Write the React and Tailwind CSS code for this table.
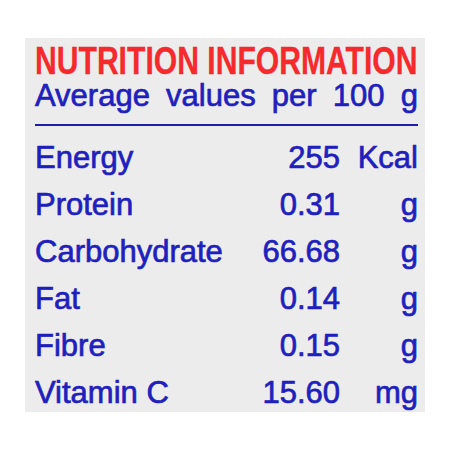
import React from 'react';

const rows = [
  { name: 'Energy', value: '255', unit: 'Kcal' },
  { name: 'Protein', value: '0.31', unit: 'g' },
  { name: 'Carbohydrate', value: '66.68', unit: 'g' },
  { name: 'Fat', value: '0.14', unit: 'g' },
  { name: 'Fibre', value: '0.15', unit: 'g' },
  { name: 'Vitamin C', value: '15.60', unit: 'mg' },
];

const App = () => {
  return (
    <div className="w-[450px] h-[450px] bg-white pt-[38px] pl-[25px] font-['Liberation_Sans',Arial,sans-serif]">
      <div className="w-[400px] h-[374px] bg-[#ececec] pl-[10px] pr-[7px] pt-[4px]">
        <div className="h-[38px] text-[39px] leading-[38px] font-bold text-[#f42a2c] whitespace-nowrap origin-left scale-x-[0.772] [-webkit-text-stroke:0.3px_currentColor]">
          NUTRITION INFORMATION
        </div>
        <div className="mt-[1px] flex justify-between h-[30px] text-[31px] leading-[30px] text-[#1f1fbd] [-webkit-text-stroke:0.7px_currentColor]">
          <span>Average</span>
          <span>values</span>
          <span>per</span>
          <span>100</span>
          <span>g</span>
        </div>
        <div className="mt-[13px] h-[2px] bg-[#1e1ea8]" />
        <div className="mt-[8px]">
          {rows.map((r) => (
            <div key={r.name} className="flex items-start h-[47px] text-[31px] leading-[47px] text-[#1f1fbd] [-webkit-text-stroke:0.7px_currentColor]">
              <span className="flex-1">{r.name}</span>
              <span className="text-right">{r.value}</span>
              <span className="w-[78px] text-right">{r.unit}</span>
            </div>
          ))}
        </div>
      </div>
    </div>
  );
};

export default App;
